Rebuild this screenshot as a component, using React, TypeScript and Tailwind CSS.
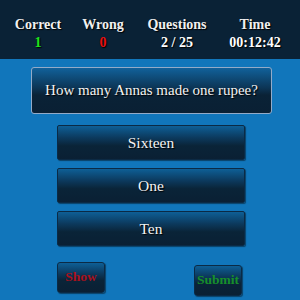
export default function App() {
  const stats = [
    { label: 'Correct', value: '1', color: 'text-[#1ee01e]' },
    { label: 'Wrong', value: '0', color: 'text-[#e81010]' },
    { label: 'Questions', value: '2 / 25', color: 'text-white' },
    { label: 'Time', value: '00:12:42', color: 'text-white' },
  ];

  const options = ['Sixteen', 'One', 'Ten'];

  return (
    <div className="w-[300px] h-[300px] overflow-hidden bg-[#1176bb] font-['Liberation_Serif',serif]">
      {/* Score bar */}
      <div className="h-[59px] bg-[#0a2236] grid grid-cols-[76px_54px_94px_62px] pt-[16px] text-[14px] font-bold leading-[18px] [text-shadow:1px_1px_1px_#000]">
        {stats.map((s) => (
          <div key={s.label} className="flex flex-col items-center">
            <span className="text-[#f0f0f0]">{s.label}</span>
            <span className={s.color}>{s.value}</span>
          </div>
        ))}
      </div>

      {/* Question */}
      <div className="ml-[31px] mt-[8px] w-[241px] h-[47px] rounded-[3px] border border-[#93abc8] bg-[linear-gradient(to_bottom,#11619a_0%,#0c3454_45%,#0a2236_60%,#0a2034_100%)] flex items-center justify-center text-[15px] text-[#f2f2f2] [text-shadow:1px_1px_1px_#000]">
        How many Annas made one rupee?
      </div>

      {/* Answers */}
      <div className="ml-[57px] mt-[11px] w-[188px] flex flex-col gap-[8px]">
        {options.map((o) => (
          <div
            key={o}
            className="h-[35px] rounded-[2px] border border-[#0b2a45] shadow-[1px_1px_1px_rgba(0,0,0,0.45)] bg-[linear-gradient(to_bottom,#0e5f96_0%,#0c3a5e_35%,#0a2438_60%,#0a2034_100%)] flex items-center justify-center text-[15.5px] text-[#f2f2f2] [text-shadow:1px_1px_1px_#000]"
          >
            {o}
          </div>
        ))}
      </div>

      {/* Actions */}
      <div className="flex items-start mt-[16px] pl-[57px]">
        <div className="w-[48px] h-[31px] rounded-[3px] border border-[#0b2a45] shadow-[1px_1px_1px_rgba(0,0,0,0.45)] bg-[linear-gradient(to_bottom,#0e5f96_0%,#0c3a5e_35%,#0a2438_60%,#0a2034_100%)] flex items-center justify-center text-[13.5px] font-bold text-[#a8101c]">
          Show
        </div>
        <div className="ml-[89px] mt-[3px] w-[48px] h-[31px] rounded-[3px] border border-[#0b2a45] shadow-[1px_1px_1px_rgba(0,0,0,0.45)] bg-[linear-gradient(to_bottom,#0e5f96_0%,#0c3a5e_35%,#0a2438_60%,#0a2034_100%)] flex items-center justify-center text-[13.5px] font-bold text-[#17902a]">
          Submit
        </div>
      </div>
    </div>
  );
}
